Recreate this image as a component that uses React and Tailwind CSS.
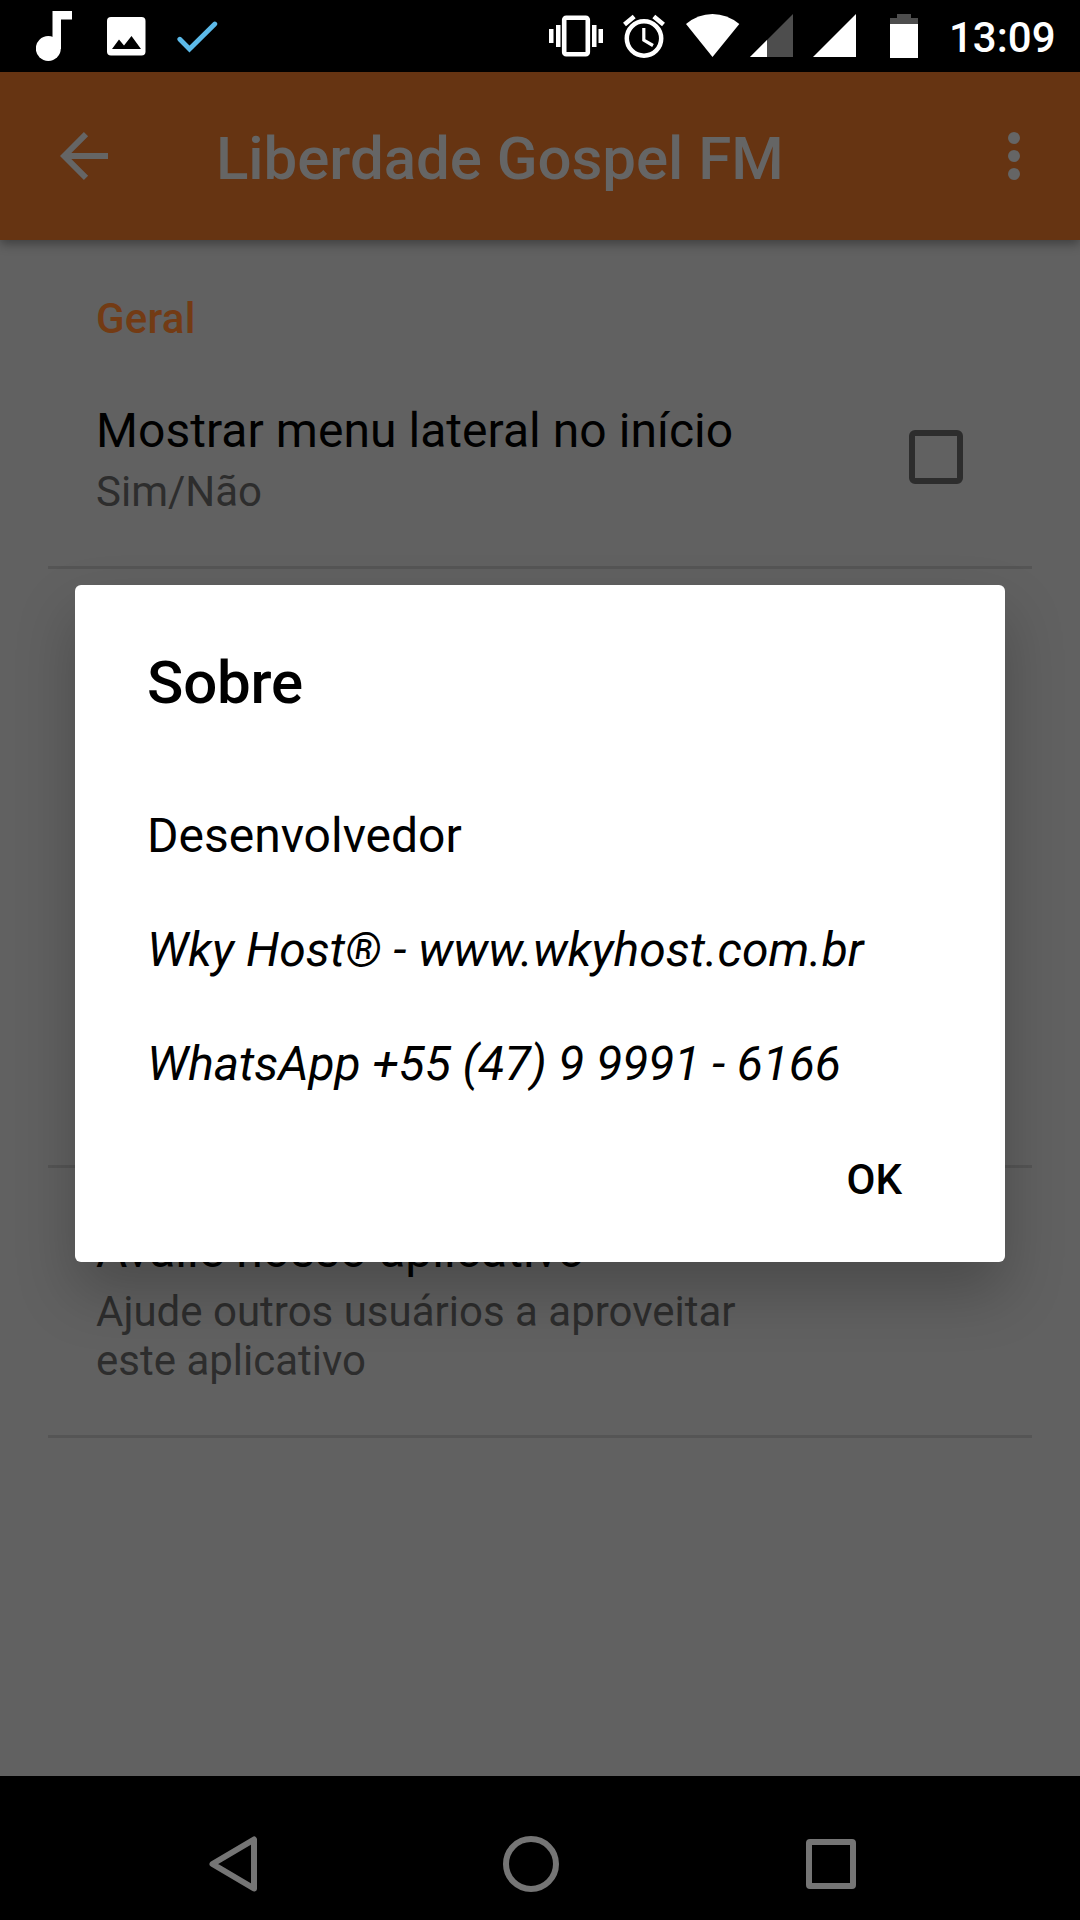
import { useState } from "react";

const MusicIcon = () => (
  <svg width="36" height="72" viewBox="0 0 36 72" fill="#fff">
    <circle cx="12.3" cy="48.5" r="12.5" />
    <path d="M16.5 11H36v8.5H25V49h-8.5z" />
  </svg>
);

const ImageIcon = () => (
  <svg width="39" height="72" viewBox="0 0 39 72">
    <rect x="0" y="17" width="38.5" height="38.5" rx="4" fill="#fff" />
    <path d="M5 49l7-9.5 5 6 7.5-9.5L34 49z" fill="#000" />
  </svg>
);

const CheckIcon = () => (
  <svg width="41" height="72" viewBox="0 0 41 72" fill="none" stroke="#5cbae9" strokeWidth="4.8" strokeLinecap="round">
    <path d="M2.8 39.2L12.5 49 37.8 24" />
  </svg>
);

const VibrateIcon = () => (
  <svg width="54" height="72" viewBox="0 0 54 72">
    <rect x="15.2" y="17.7" width="23.6" height="36.6" rx="2" fill="none" stroke="#fff" strokeWidth="4.6" />
    <path d="M0 29h4.5v14H0zM7 25h4.5v22H7zM43 25h4.5v22H43zM49.5 29H54v14h-4.5z" fill="#fff" />
  </svg>
);

const AlarmIcon = () => (
  <svg width="42" height="72" viewBox="0 0 42 72" fill="none" stroke="#fff">
    <circle cx="21" cy="38.5" r="17.2" strokeWidth="4.5" />
    <path d="M20.8 28v12.2l9.2 5.3" strokeWidth="3.2" />
    <path d="M1.5 24.5l9.7-8M30.8 16.5l9.7 8" strokeWidth="4.6" />
  </svg>
);

const WifiIcon = () => (
  <svg width="54" height="72" viewBox="0 0 54 72" fill="#fff">
    <path d="M26.5 57L0 24Q12 14 26.5 14T53.3 24z" />
  </svg>
);

const WeakSignalIcon = () => (
  <svg width="43" height="72" viewBox="0 0 43 72">
    <path d="M0 57L43 14v43z" fill="#4d4d4d" />
    <path d="M0 57l17-17v17z" fill="#fff" />
  </svg>
);

const SignalIcon = () => (
  <svg width="43" height="72" viewBox="0 0 43 72">
    <path d="M0 57L43 14v43z" fill="#fff" />
  </svg>
);

const BatteryIcon = () => (
  <svg width="28" height="72" viewBox="0 0 28 72">
    <path d="M7 14h14v4h7v6H0v-6h7z" fill="#4d4d4d" />
    <path d="M0 24h28v34H0z" fill="#fff" />
  </svg>
);

const StatusBar = () => (
  <div className="flex h-[72px] bg-black pl-9 pr-6">
    <MusicIcon />
    <div className="ml-[35px]"><ImageIcon /></div>
    <div className="ml-[31px]"><CheckIcon /></div>
    <div className="grow" />
    <VibrateIcon />
    <div className="ml-5"><AlarmIcon /></div>
    <div className="ml-[21px]"><WifiIcon /></div>
    <div className="ml-[10px]"><WeakSignalIcon /></div>
    <div className="ml-5"><SignalIcon /></div>
    <div className="ml-[34px]"><BatteryIcon /></div>
    <div className="ml-[31px] w-[107px] text-[42px] leading-[75px] font-medium text-white">13:09</div>
  </div>
);

const Toolbar = () => (
  <div className="relative flex h-[168px] items-center bg-[#663412] shadow-[0_4px_10px_rgba(0,0,0,0.35)]">
    <button className="ml-[60px]">
      <svg width="48" height="48" viewBox="0 0 48 48" fill="none" stroke="#656565" strokeWidth="6">
        <path d="M48 24H5M26 2.2L4.2 24 26 45.8" />
      </svg>
    </button>
    <h1 className="ml-[108px] grow pt-1 text-[60px] leading-[71px] font-medium tracking-[-0.05px] text-[#656565]">Liberdade Gospel FM</h1>
    <button className="mr-[60px]">
      <svg width="12" height="48" viewBox="0 0 12 48" fill="#656565">
        <circle cx="6" cy="6" r="6" />
        <circle cx="6" cy="24" r="6" />
        <circle cx="6" cy="42" r="6" />
      </svg>
    </button>
  </div>
);

const Divider = () => <div className="mx-12 h-[3px] bg-[#555555]" />;

const Preference = ({ title, summary, children }) => (
  <div className="flex pl-24 pr-[117px]">
    <div className="w-[720px]">
      <div className="text-[48px] leading-[60px] tracking-[0.05px] text-black">{title}</div>
      <div className="mt-1.5 w-[680px] text-[42px] leading-[49px] text-[#2d2d2d]">{summary}</div>
    </div>
    {children}
  </div>
);

const AboutDialog = ({ onClose }) => (
  <div className="absolute top-[585px] left-[75px] h-[677px] w-[930px] rounded-[6px] bg-white px-[72px] text-[48px] leading-[57px] text-black shadow-[0_30px_60px_rgba(0,0,0,0.23)]">
    <h2 className="pt-[62px] text-[60px] leading-[71px] font-medium tracking-[-0.2px]">Sobre</h2>
    <div className="pt-[89px]">
      <p>Desenvolvedor</p>
      <p className="mt-[57px] tracking-[0.04px] italic">Wky Host® - www.wkyhost.com.br</p>
      <p className="mt-[57px] tracking-[-0.08px] italic">WhatsApp +55 (47) 9 9991 - 6166</p>
    </div>
    <div className="mt-[53px] flex justify-end pr-[31px]">
      <button onClick={onClose} className="text-[42px] leading-[70px] font-medium">OK</button>
    </div>
  </div>
);

const App = () => {
  const [open, setOpen] = useState(true);
  const [showMenu, setShowMenu] = useState(false);

  return (
    <div className="relative flex h-[1920px] w-[1080px] flex-col overflow-hidden bg-[#616161] font-[Roboto,sans-serif]">
      <StatusBar />
      <Toolbar />

      <div className="h-[1536px]">
        <h3 className="pt-[54px] pl-24 text-[42px] leading-[49px] font-medium tracking-[0.2px] text-[#733b14]">Geral</h3>
        <div className="h-[223px] pt-[58px]">
          <Preference title="Mostrar menu lateral no início" summary="Sim/Não">
            <button
              onClick={() => setShowMenu(!showMenu)}
              className="mt-[29px] ml-[93px] size-[54px] shrink-0 rounded-[6px] border-6 border-[#2d2d2d]"
            />
          </Preference>
        </div>
        <Divider />
        <div className="h-[596px]" />
        <Divider />
        <div className="h-[267px] pt-[53px]">
          <Preference title="Avalie nosso aplicativo" summary="Ajude outros usuários a aproveitar este aplicativo" />
        </div>
        <Divider />
      </div>

      {/* navigation buttons */}
      <div className="flex h-36 items-center bg-black pt-8 pl-[208px]">
        <svg width="50" height="56" viewBox="0 0 50 56" fill="none" stroke="#757575" strokeWidth="6" strokeLinejoin="round">
          <path d="M46 3.5v49L4.5 28z" />
        </svg>
        <svg className="ml-[245px]" width="56" height="56" viewBox="0 0 56 56" fill="none" stroke="#757575" strokeWidth="6">
          <circle cx="28" cy="28" r="25" />
        </svg>
        <div className="ml-[247px] size-[50px] rounded-[4px] border-6 border-[#757575]" />
      </div>

      {open && <AboutDialog onClose={() => setOpen(false)} />}
    </div>
  );
};

export default App;
